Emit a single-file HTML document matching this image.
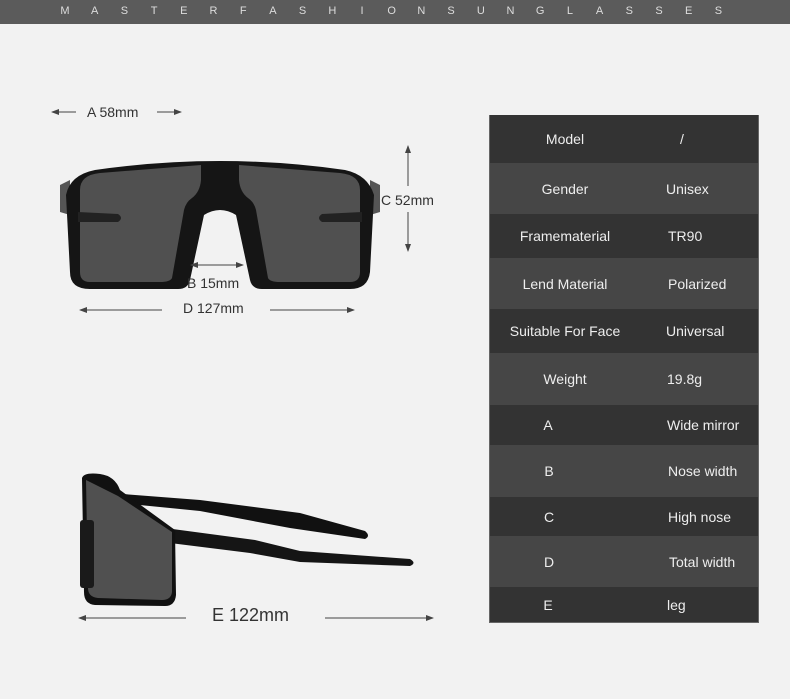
<!DOCTYPE html>
<html><head><meta charset="utf-8"><style>
html,body{margin:0;padding:0;width:790px;height:699px;background:#f2f2f2;overflow:hidden;font-family:"Liberation Sans",sans-serif}
.top{position:absolute;left:0;top:0;width:790px;height:24px;background:#5b5b5b}
.top span{position:absolute;top:5px;color:#ddd;font-size:11px;width:10px;text-align:center}
.lbl{position:absolute;color:#333;font-size:13px;white-space:nowrap}
.tbl{position:absolute;left:489px;top:115px;width:268px;border:1px solid #666;border-top:none}
.r{position:relative;color:#eee;font-size:14px}
.r .a{position:absolute;top:50%;transform:translate(-50%,-50%);left:75px;white-space:nowrap}
.r .b{position:absolute;top:50%;transform:translateY(-50%);white-space:nowrap}
.d{background:#333}.l{background:#464646}
</style></head><body>
<div class="top" id="top"></div>
<script>
var s="MASTERFASHIONSUNGLASSES",t=document.getElementById('top');
for(var i=0;i<s.length;i++){var e=document.createElement('span');e.textContent=s[i];e.style.left=(65+i*29.7-5)+'px';t.appendChild(e);}
</script>
<svg width="790" height="699" style="position:absolute;left:0;top:0">
<defs><marker id="ah" markerWidth="8" markerHeight="6" refX="7" refY="3" orient="auto"><path d="M0,0 L8,3 L0,6 Z" fill="#444"/></marker></defs>
<!-- front -->
<path d="M60,185 L70,180 L70,215 L60,212 Z M380,185 L370,180 L370,215 L380,212 Z" fill="#555"/>
<path d="M66,195 Q70,175 95,170 Q220,152 345,170 Q368,175 374,195 L370,272 Q368,289 350,289 L262,289 Q252,289 250,280 L236,215 Q220,205 204,215 L190,280 Q188,289 178,289 L90,289 Q70,289 70,272 Z" fill="#151515"/>
<path d="M80,190 Q80,175 100,173 L201,165 L201,180 Q200,192 192,198 Q186,202 184,210 L172,278 Q170,282 160,282 L90,282 Q80,282 80,272 Z" fill="#505050"/>
<path d="M360,190 Q360,175 340,173 L239,165 L239,180 Q240,192 248,198 Q254,202 256,210 L268,278 Q270,282 280,282 L350,282 Q360,282 360,272 Z" fill="#505050"/>
<path d="M78,212 L118,214 Q124,218 118,222 L78,222 Z M362,212 L322,214 Q316,218 322,222 L362,222 Z" fill="#222"/>
<!-- side -->
<path d="M110,493 L200,500 L300,513 L365,531 Q371,536 365,539 L290,528 L200,511 L120,503 Z" fill="#111"/>
<path d="M165,528 L255,540 L300,551 L410,559 Q417,563 410,566 L300,562 L250,553 L170,543 Z" fill="#151515"/>
<path d="M82,478 Q84,472 100,474 Q115,476 120,490 L175,530 L176,595 Q175,606 165,606 L95,605 Q84,604 84,592 Z" fill="#111"/>
<path d="M86,480 L118,496 L172,532 L172,592 Q171,600 162,600 L98,598 Q88,597 88,588 Z" fill="#505050"/>
<rect x="80" y="520" width="14" height="68" rx="3" fill="#1a1a1a"/>
<g stroke="#444" stroke-width="1" fill="none" marker-end="url(#ah)">
<line x1="76" y1="112" x2="52" y2="112"/><line x1="157" y1="112" x2="181" y2="112"/>
<line x1="408" y1="186" x2="408" y2="146"/><line x1="408" y1="212" x2="408" y2="251"/>
<line x1="215" y1="265" x2="243" y2="265"/><line x1="215" y1="265" x2="191" y2="265"/>
<line x1="162" y1="310" x2="80" y2="310"/><line x1="270" y1="310" x2="354" y2="310"/>
<line x1="186" y1="618" x2="79" y2="618"/><line x1="325" y1="618" x2="433" y2="618"/>
</g>
</svg>
<div class="lbl" style="left:87px;top:104px;font-size:14px">A 58mm</div>
<div class="lbl" style="left:381px;top:192px;font-size:14px">C 52mm</div>
<div class="lbl" style="left:187px;top:275px;font-size:14px">B 15mm</div>
<div class="lbl" style="left:183px;top:300px;font-size:14px">D 127mm</div>
<div class="lbl" style="left:212px;top:605px;font-size:18px">E 122mm</div>
<div class="tbl">
<div class="r d" style="height:48px"><span class="a">Model</span><span class="b" style="left:190px">/</span></div>
<div class="r l" style="height:51px"><span class="a">Gender</span><span class="b" style="left:176px">Unisex</span></div>
<div class="r d" style="height:44px"><span class="a">Framematerial</span><span class="b" style="left:178px">TR90</span></div>
<div class="r l" style="height:51px"><span class="a">Lend Material</span><span class="b" style="left:178px">Polarized</span></div>
<div class="r d" style="height:44px"><span class="a">Suitable For Face</span><span class="b" style="left:176px">Universal</span></div>
<div class="r l" style="height:52px"><span class="a">Weight</span><span class="b" style="left:177px">19.8g</span></div>
<div class="r d" style="height:40px"><span class="a" style="left:58px">A</span><span class="b" style="left:177px">Wide mirror</span></div>
<div class="r l" style="height:52px"><span class="a" style="left:59px">B</span><span class="b" style="left:178px">Nose width</span></div>
<div class="r d" style="height:39px"><span class="a" style="left:59px">C</span><span class="b" style="left:178px">High nose</span></div>
<div class="r l" style="height:51px"><span class="a" style="left:59px">D</span><span class="b" style="left:179px">Total width</span></div>
<div class="r d" style="height:35px"><span class="a" style="left:58px">E</span><span class="b" style="left:177px">leg</span></div>
</div>
</body></html>
